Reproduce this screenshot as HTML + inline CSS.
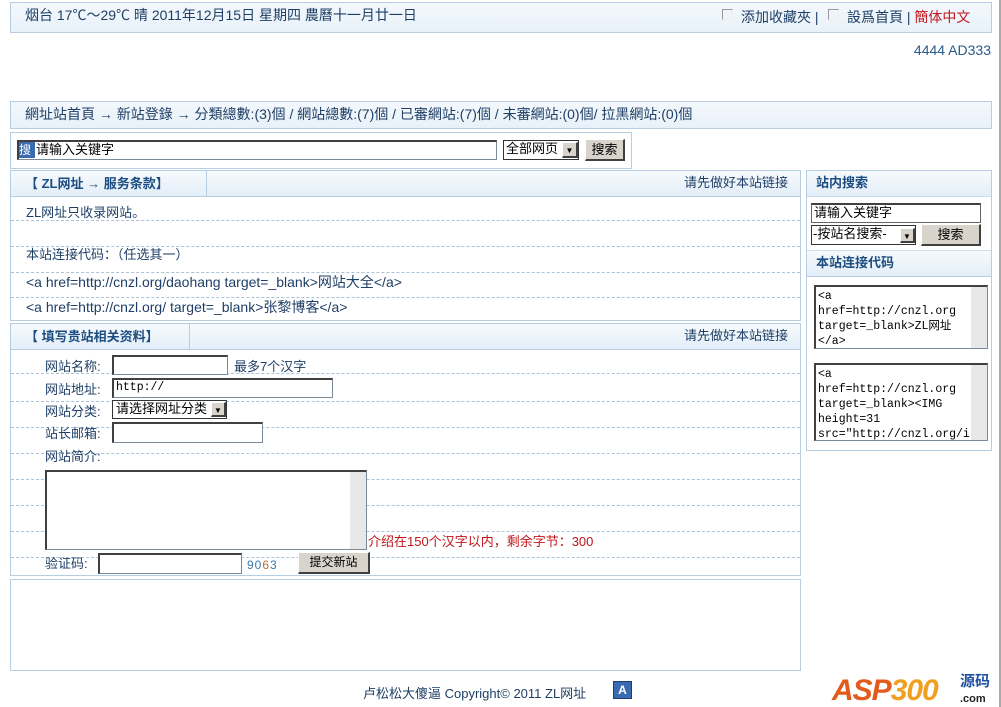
<!DOCTYPE html>
<html><head><meta charset="utf-8">
<style>
*{margin:0;padding:0;box-sizing:border-box}
body{width:1001px;height:707px;background:#fff;position:relative;overflow:hidden;font-family:"Liberation Sans","Noto Sans CJK SC",sans-serif;font-size:13px;line-height:16px;color:#1f3f66}
.a{position:absolute}
.bar{background:linear-gradient(#f3f8fc,#e8f1f9);border:1px solid #b6cde2}
.hd{background:linear-gradient(#f6fafd,#e3eef8);border-bottom:1px solid #b6cde2;height:26px}
.tab{position:absolute;left:0;top:0;height:26px;border-right:1px solid #b6cde2;font-weight:bold;color:#1c4d80;padding:5px 0 0 14px}
.dl{position:absolute;left:0;right:0;border-top:1px dashed #aac3da}
.inp{position:absolute;background:#fff;border:1px solid #7a8a99;border-top:2px solid #404040;border-left:2px solid #404040}
.btn{position:absolute;background:#d8d4cc;border:1px solid #fff;border-right:2px solid #404040;border-bottom:2px solid #404040;text-align:center;color:#000;font-size:12px}
.mono{font-family:"Liberation Mono","Noto Sans CJK SC",monospace;font-size:11.5px;color:#000;line-height:15px}
.sb{position:absolute;right:0;top:0;bottom:0;width:16px;background:#e8e8e8}
</style></head><body>
<div class="a bar" style="left:10px;top:2px;width:982px;height:31px"></div>
<div class="a" style="left:25px;top:7px;font-size:14px">烟台 17℃～29℃ 晴 2011年12月15日 星期四 農曆十一月廿一日</div>
<div class="a" style="left:722px;top:9px;width:11px;height:11px;border:1px solid #999;border-right-color:#eee;border-bottom-color:#eee"></div>
<div class="a" style="left:741px;top:9px;font-size:14px">添加收藏夾 |</div>
<div class="a" style="left:828px;top:9px;width:11px;height:11px;border:1px solid #999;border-right-color:#eee;border-bottom-color:#eee"></div>
<div class="a" style="left:847px;top:9px;font-size:14px">設爲首頁 | <span style="color:#c0161b">簡体中文</span></div>
<div class="a" style="right:10px;top:42px;font-size:14px;color:#2a5a88">4444 AD333</div>
<div class="a" style="right:0;top:0;width:2px;height:707px;background:#aaa"></div>

<div class="a bar" style="left:10px;top:101px;width:982px;height:28px"></div>
<div class="a" style="left:25px;top:106px;font-size:14px">網址站首頁 → 新站登錄 → 分類總數:(3)個 / 網站總數:(7)個 / 已審網站:(7)個 / 未審網站:(0)個/ 拉黑網站:(0)個</div>

<div class="a" style="left:10px;top:132px;width:622px;height:37px;border:1px solid #b6cde2"></div>
<div class="inp" style="left:17px;top:140px;width:480px;height:20px"></div>
<div class="a" style="left:19px;top:142px;width:16px;height:16px;background:#3a6ab0;color:#fff;font-size:12px;line-height:16px">搜</div>
<div class="a" style="left:36px;top:142px;font-size:13px;color:#000">请输入关键字</div>
<div class="a" style="left:503px;top:140px;width:76px;height:20px;border:1px solid #333;background:#fff;font-size:13px;color:#000;padding-left:2px">全部网页</div>
<div class="btn" style="left:562px;top:142px;width:16px;height:16px;font-size:8px">▼</div>
<div class="btn" style="left:585px;top:139px;width:40px;height:22px;font-size:13px;line-height:19px">搜索</div>

<div class="a" style="left:10px;top:170px;width:791px;height:151px;border:1px solid #b6cde2">
<div class="hd"><div class="tab" style="width:196px">【 ZL网址 → 服务条款】</div><div class="a" style="right:12px;top:4px">请先做好本站链接</div></div>
<div class="a" style="left:15px;top:34px">ZL网址只收录网站。</div>
<div class="dl" style="top:49px"></div>
<div class="dl" style="top:75px"></div>
<div class="a" style="left:15px;top:76px">本站连接代码：（任选其一）</div>
<div class="dl" style="top:101px"></div>
<div class="a" style="left:15px;top:103px;font-size:14px">&lt;a href=http://cnzl.org/daohang target=_blank&gt;网站大全&lt;/a&gt;</div>
<div class="dl" style="top:126px"></div>
<div class="a" style="left:15px;top:128px;font-size:14px">&lt;a href=http://cnzl.org/ target=_blank&gt;张黎博客&lt;/a&gt;</div>
</div>

<div class="a" style="left:10px;top:323px;width:791px;height:253px;border:1px solid #b6cde2">
<div class="hd"><div class="tab" style="width:179px">【 填写贵站相关资料】</div><div class="a" style="right:12px;top:4px">请先做好本站链接</div></div>
<div class="dl" style="top:49px"></div><div class="dl" style="top:77px"></div><div class="dl" style="top:103px"></div><div class="dl" style="top:129px"></div><div class="dl" style="top:155px"></div><div class="dl" style="top:181px"></div><div class="dl" style="top:207px"></div><div class="dl" style="top:233px"></div>
</div>
<div class="a" style="left:45px;top:359px">网站名称:</div>
<div class="inp" style="left:112px;top:355px;width:116px;height:20px"></div>
<div class="a" style="left:234px;top:359px">最多7个汉字</div>
<div class="a" style="left:45px;top:382px">网站地址:</div>
<div class="inp mono" style="left:112px;top:378px;width:221px;height:20px;padding-left:2px">http://</div>
<div class="a" style="left:45px;top:404px">网站分类:</div>
<div class="a" style="left:112px;top:400px;width:115px;height:19px;border:1px solid #333;background:#fff;color:#000;padding-left:3px">请选择网址分类</div>
<div class="btn" style="left:211px;top:402px;width:15px;height:15px;font-size:8px">▼</div>
<div class="a" style="left:45px;top:426px">站长邮箱:</div>
<div class="inp" style="left:112px;top:422px;width:151px;height:21px"></div>
<div class="a" style="left:45px;top:449px">网站简介:</div>
<div class="inp" style="left:45px;top:470px;width:322px;height:80px"><div class="sb"></div></div>
<div class="a" style="left:368px;top:534px;color:#c0161b">介绍在150个汉字以内，剩余字节：300</div>
<div class="a" style="left:45px;top:556px">验证码:</div>
<div class="inp" style="left:98px;top:553px;width:144px;height:21px"></div>
<div class="a" style="left:247px;top:557px;color:#3a78b0;font-size:12px;letter-spacing:1px">90<span style="color:#c76a2a">6</span>3</div>
<div class="btn" style="left:298px;top:552px;width:72px;height:22px;line-height:19px">提交新站</div>

<div class="a" style="left:10px;top:579px;width:791px;height:92px;border:1px solid #b6cde2"></div>

<div class="a" style="left:806px;top:170px;width:186px;height:281px;border:1px solid #b6cde2">
<div class="hd" style="border-bottom:1px solid #cbdcec"><div class="a" style="left:9px;top:4px;font-weight:bold;color:#1c4d80">站内搜索</div></div>
<div class="inp" style="left:4px;top:32px;width:170px;height:20px;border:1px solid #666;border-top:2px solid #404040"><span style="color:#000;padding-left:2px">请输入关键字</span></div>
<div class="a" style="left:4px;top:54px;width:105px;height:20px;border:1px solid #333;background:#fff;color:#000;padding-left:1px">-按站名搜索-</div>
<div class="btn" style="left:93px;top:57px;width:15px;height:15px;font-size:8px">▼</div>
<div class="btn" style="left:114px;top:53px;width:60px;height:22px;font-size:13px;line-height:19px">搜索</div>
<div class="a" style="left:0;right:0;top:79px;height:27px;background:linear-gradient(#f6fafd,#e3eef8);border-top:1px solid #cbdcec;border-bottom:1px solid #b6cde2"><div class="a" style="left:9px;top:4px;font-weight:bold;color:#1c4d80">本站连接代码</div></div>
<div class="inp mono" style="left:7px;top:114px;width:174px;height:64px;padding:2px;overflow:hidden"><div class="sb"></div>&lt;a<br>href=http://cnzl.org<br>target=_blank&gt;ZL网址<br>&lt;/a&gt;</div>
<div class="inp mono" style="left:7px;top:192px;width:174px;height:78px;padding:2px;overflow:hidden"><div class="sb"></div>&lt;a<br>href=http://cnzl.org<br>target=_blank&gt;&lt;IMG<br>height=31<br>src="http://cnzl.org/i</div>
</div>

<div class="a" style="left:363px;top:686px;font-size:13px">卢松松大傻逼 Copyright© 2011 ZL网址</div>
<div class="a" style="left:613px;top:681px;width:19px;height:18px;background:#3a6ab0;border:1px solid #1c3f70;color:#fff;font-weight:bold;font-size:12px;text-align:center">A</div>
<div class="a" style="left:832px;top:676px;font-size:30px;font-weight:bold;font-style:italic;color:#e25a1c;letter-spacing:-1px;line-height:30px">ASP<span style="color:#f0a020">300</span></div>
<div class="a" style="left:960px;top:674px;font-size:15px;font-weight:bold;color:#2050a0;line-height:16px">源码</div>
<div class="a" style="left:960px;top:691px;font-size:11px;font-weight:bold;color:#222">.com</div>
</body></html>
